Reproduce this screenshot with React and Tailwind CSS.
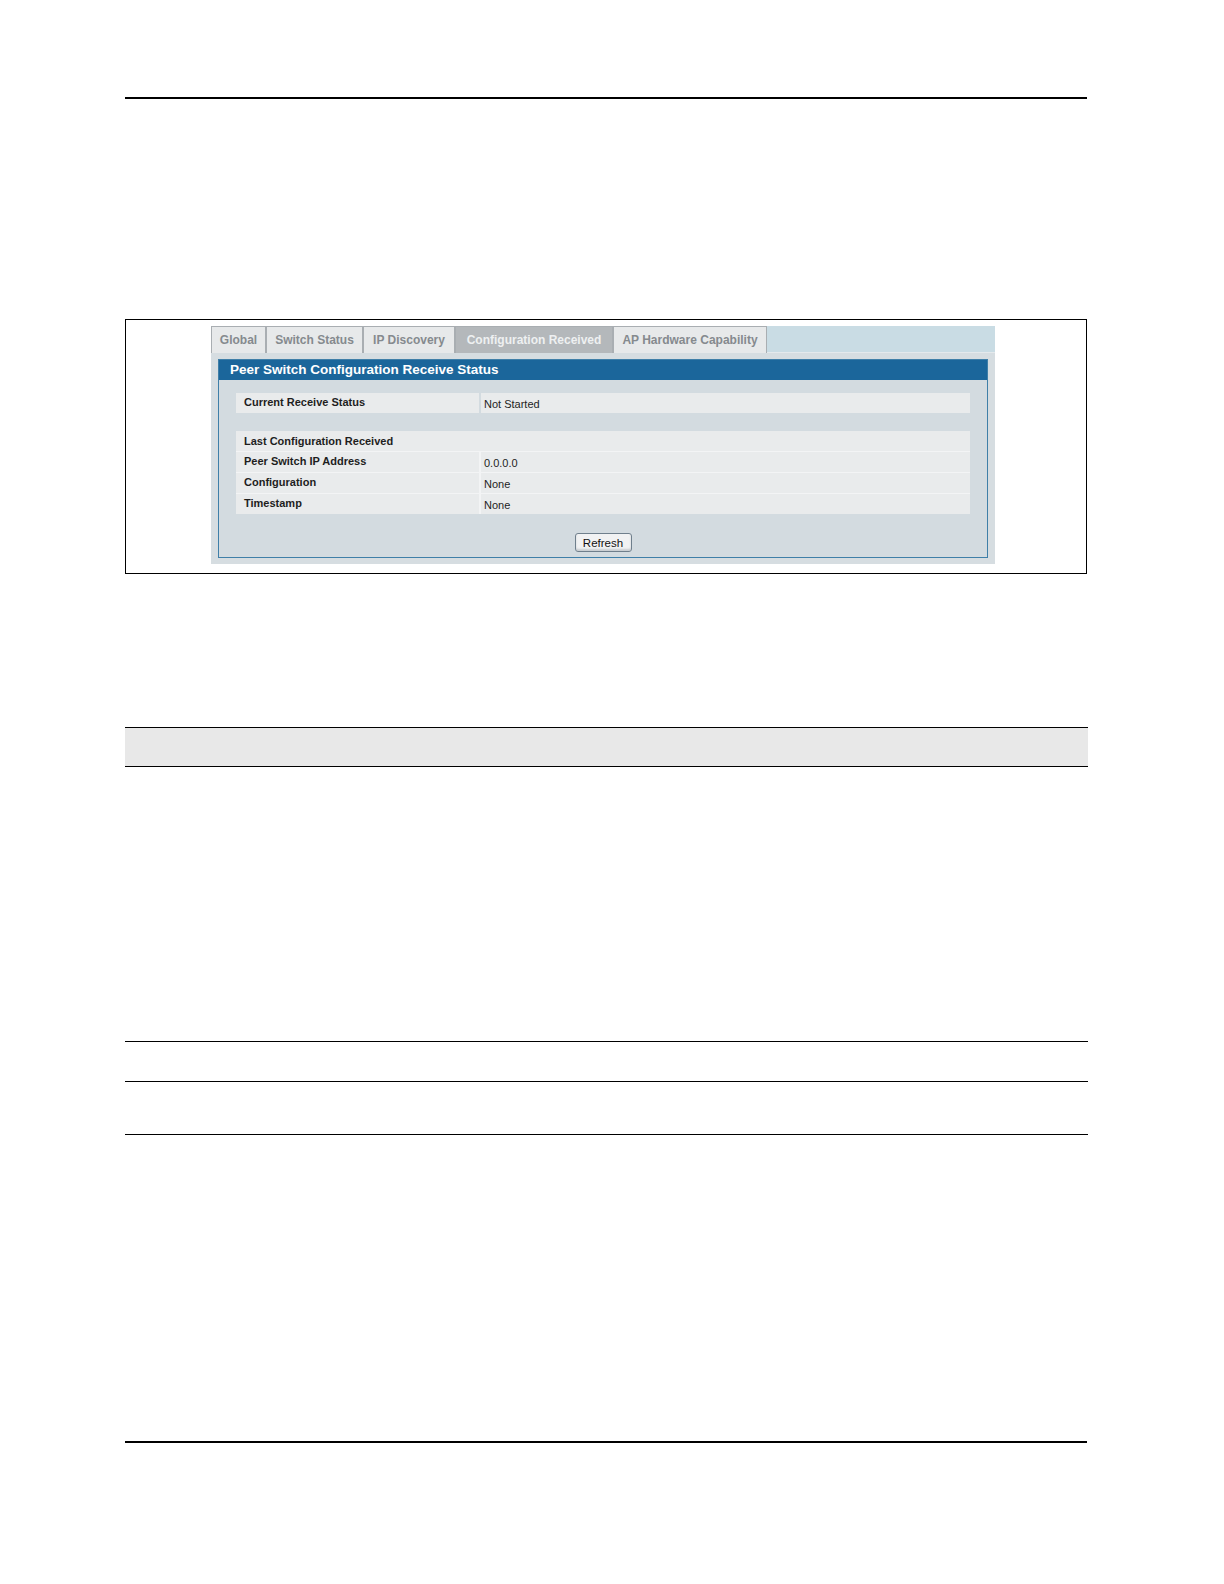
import React from 'react';

const tabs = [
  { label: 'Global', w: 'w-[55px]' },
  { label: 'Switch Status', w: 'w-[97px]' },
  { label: 'IP Discovery', w: 'w-[92px]' },
  { label: 'Configuration Received', w: 'w-[158px]', active: true },
  { label: 'AP Hardware Capability', w: 'w-[154px]' },
];

const lastRows = [
  ['Peer Switch IP Address', '0.0.0.0'],
  ['Configuration', 'None'],
  ['Timestamp', 'None'],
];

const Row = ({ label, value }) => (
  <div className="flex h-[20px] gap-[2px]">
    <div className="w-[243px] bg-[#e9ebec] pl-[8px] pt-[2px] font-bold leading-[14px]">{label}</div>
    <div className="flex-1 bg-[#e9ebec] pl-[3px] pt-[4px] leading-[14px]">{value}</div>
  </div>
);

const ConfigReceivedScreen = () => (
  <div className="w-[784px] h-[238px] bg-[#d6dde1] font-['Liberation_Sans',Arial,sans-serif] text-[11px] text-[#1e1e1e]">
    {/* tab strip */}
    <div className="flex h-[27px] bg-[#c9dce4] border-b border-[#e4e9ec]">
      {tabs.map((t) => (
        <div
          key={t.label}
          className={`${t.w} h-[27px] flex items-center justify-center border border-b-0 border-[#a9aeb2] font-bold text-[12px] ${
            t.active ? 'bg-[#b4b8bb] text-[#eef0f1]' : 'bg-[#e7e9ea] text-[#858a8e]'
          }`}
        >
          {t.label}
        </div>
      ))}
    </div>

    <div className="px-[7px] pt-[6px]">
      <div className="border border-[#3f7fa8] bg-[#d3dbe0] h-[199px] flex flex-col">
        <div className="h-[20px] bg-[#1b669b] pl-[11px] text-white font-bold text-[13.5px] leading-[20px]">
          Peer Switch Configuration Receive Status
        </div>

        <div className="px-[17px] pt-[13px]">
          <Row label="Current Receive Status" value="Not Started" />

          <div className="mt-[18px] flex flex-col gap-[1px] bg-[#f3f4f5]">
            <div className="h-[20px] bg-[#e9ebec] pl-[8px] pt-[2px] font-bold leading-[16px]">
              Last Configuration Received
            </div>
            {lastRows.map(([l, v]) => (
              <Row key={l} label={l} value={v} />
            ))}
          </div>

          <div className="flex justify-center mt-[19px]">
            <button className="w-[57px] h-[19px] rounded-[3px] border border-[#6f7f8c] bg-[#f1f2f3] text-[11.5px] leading-[16px] text-[#111] shadow-[inset_0_-2px_2px_#c9cdd1]">
              Refresh
            </button>
          </div>
        </div>
      </div>
    </div>
  </div>
);

export default function App() {
  return (
    <div className="w-[1224px] h-[1584px] bg-white pt-[97px] pl-[125px] pr-[137px]">
      <div className="h-[2px] bg-black" />

      {/* figure */}
      <div className="mt-[220px] h-[255px] border border-black pl-[85px] pt-[6px]">
        <ConfigReceivedScreen />
      </div>

      {/* table */}
      <div className="mt-[153px] w-[963px]">
        <div className="h-[40px] bg-[#e8e8e8] border-t border-b border-black" />
        <div className="h-[275px] border-b border-black" />
        <div className="h-[40px] border-b border-black" />
        <div className="h-[53px] border-b border-black" />
      </div>

      <div className="mt-[306px] h-[2px] bg-black" />
    </div>
  );
}
